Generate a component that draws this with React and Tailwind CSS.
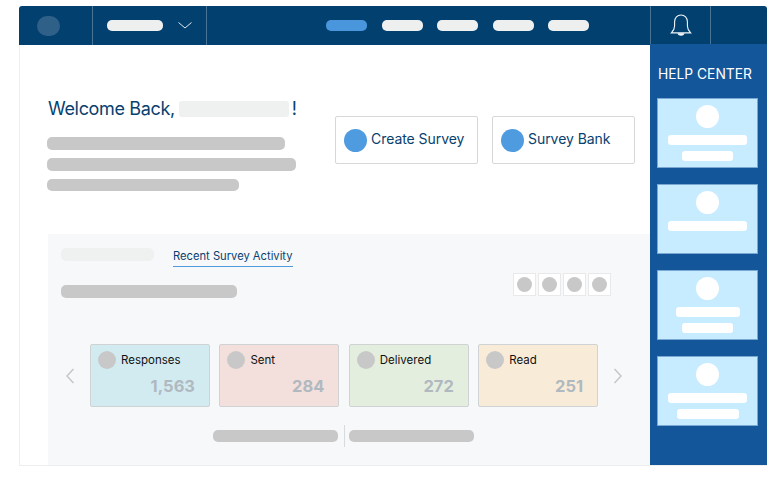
import React from 'react';

const bar = 'rounded-[5px] bg-[#c8c8c8]';

function Stat({ label, value, tint }) {
    return (
        <div className={`w-[120px] h-[63px] shrink-0 rounded-[2px] border border-[#cfd3d4] px-[7px] pt-[6px] ${tint}`}>
            <div className="flex items-center gap-[5px]">
                <div className="w-[18px] h-[18px] rounded-full bg-[#c8c8c8]" />
                <span className="text-[11.5px] leading-[18px] text-[#111]">{label}</span>
            </div>
            <div className="text-right pr-[7px] mt-[5px] text-[16.5px] leading-[24px] font-bold text-[#b0b9c0]">{value}</div>
        </div>
    );
}

function HelpCard({ first, second }) {
    return (
        <div className="w-[101px] h-[70px] flex flex-col items-center bg-[#c7ebff] border border-[#7aa8d0] pt-[6px]">
            <div className="w-[23px] h-[23px] rounded-full bg-white" />
            <div className="h-[10px] mt-[7px] rounded-[3px] bg-white" style={{ width: first }} />
            {second && <div className="h-[10px] mt-[6px] rounded-[3px] bg-white" style={{ width: second }} />}
        </div>
    );
}

function ActionButton({ label }) {
    return (
        <div className="w-[143px] h-[48px] flex items-center gap-[4px] pl-[8px] rounded-[2px] border border-[#d5d7d8] bg-white">
            <div className="w-[23px] h-[23px] rounded-full bg-[#4f9bdf]" />
            <span className="pb-[3px] text-[14px] tracking-[-0.05px] text-[#08416f]">{label}</span>
        </div>
    );
}

export default function App() {
    return (
        <div className="w-[776px] h-[480px] bg-white pt-[6px] pl-[19px] font-['Inter','Liberation_Sans',sans-serif]">
            <div className="w-[748px] h-[460px] flex flex-col rounded-t-[3px] overflow-hidden border-b border-[#eceeef]">
                {/* top nav */}
                <div className="h-[39px] shrink-0 flex items-stretch bg-[#02406f]">
                    <div className="w-[74px] flex items-center pl-[18px] border-r border-[#4a7496]">
                        <div className="w-[23px] h-[20px] rounded-full bg-[#2f6088]" />
                    </div>
                    <div className="w-[114px] flex items-center pl-[14px] border-r border-[#4a7496]">
                        <div className="w-[56px] h-[11px] rounded-[5px] bg-[#eef0f0]" />
                        <svg className="ml-[15px]" width="14" height="7" viewBox="0 0 14 7" fill="none" stroke="#dfe7ee" strokeWidth="1">
                            <path d="M0.5 0.5 7 6 13.5 0.5" />
                        </svg>
                    </div>
                    <div className="w-[443px] flex items-center gap-[14.5px] pl-[119px]">
                        <div className="w-[41px] h-[11px] rounded-[5px] bg-[#4a96dc]" />
                        <div className="w-[41px] h-[11px] rounded-[5px] bg-[#eef0f0]" />
                        <div className="w-[41px] h-[11px] rounded-[5px] bg-[#eef0f0]" />
                        <div className="w-[41px] h-[11px] rounded-[5px] bg-[#eef0f0]" />
                        <div className="w-[41px] h-[11px] rounded-[5px] bg-[#eef0f0]" />
                    </div>
                    <div className="w-[61px] flex items-center justify-center border-x border-[#4a7496]">
                        <svg width="22" height="23" viewBox="0 0 24 25" fill="none" stroke="#f2f6f9" strokeWidth="1.2">
                            <path d="M1.500 20.500c2.500-2.500 3.500-4 3.500-7.500V8.500C5 4 8 1 12 1s7 3 7 7.500V13c0 3.500 1 5 3.500 7.500z" />
                            <path d="M9 21.500c.5 2 5.500 2 6 0z" fill="#f2f6f9" />
                        </svg>
                    </div>
                    <div className="flex-1" />
                </div>

                <div className="flex-1 min-h-0 flex">
                    {/* main column */}
                    <div className="w-[631px] flex flex-col border-l border-[#eceeef]">
                        <div className="h-[189px] shrink-0 flex pl-[28px]">
                            <div className="w-[287px] pt-[51px]">
                                <div className="flex items-center h-[24px] text-[18px] tracking-[-0.35px] text-[#08416f]">
                                    <span>Welcome Back,</span>
                                    <div className="w-[110px] h-[16px] ml-[4px] mt-[2px] rounded-[3px] bg-[#eff1f1]" />
                                    <span className="ml-[3px]">!</span>
                                </div>
                                <div className="mt-[17px] -ml-[1px] flex flex-col gap-[8px]">
                                    <div className={`w-[238px] h-[13px] ${bar}`} />
                                    <div className={`w-[249px] h-[13px] ${bar}`} />
                                    <div className={`w-[192px] h-[12px] ${bar}`} />
                                </div>
                            </div>
                            <div className="flex gap-[14px] pt-[71px] items-start">
                                <ActionButton label="Create Survey" />
                                <ActionButton label="Survey Bank" />
                            </div>
                        </div>

                        {/* activity panel */}
                        <div className="flex-1 ml-[28px] bg-[#f7f8fa] pl-[13px] pt-[14px]">
                            <div className="flex items-start">
                                <div className="w-[93px] h-[13px] rounded-[5px] bg-[#eff1f1]" />
                                <div className="ml-[19px] h-[19px] border-b border-[#4f9bdf] text-[11.2px] leading-[16px] text-[#08416f]">
                                    Recent Survey Activity
                                </div>
                            </div>
                            <div className="flex items-start justify-between w-[550px] mt-[6px]">
                                <div className={`w-[176px] h-[13px] mt-[12px] ${bar}`} />
                                <div className="flex gap-[2px]">
                                    {[0, 1, 2, 3].map(i => (
                                        <div key={i} className="w-[23px] h-[23px] flex items-center justify-center bg-white border border-[#e8e9ea]">
                                            <div className="w-[15px] h-[15px] rounded-full bg-[#c8c8c8]" />
                                        </div>
                                    ))}
                                </div>
                            </div>
                            <div className="flex items-center mt-[46px] -ml-[1px]">
                                <svg className="w-[20px] shrink-0" width="9" height="16" viewBox="0 0 9 16" fill="none" stroke="#c4c8cb" strokeWidth="1.500">
                                    <path d="M8 1 1.500 8 8 15" />
                                </svg>
                                <div className="flex gap-[9.4px] ml-[10px]">
                                    <Stat label="Responses" value="1,563" tint="bg-[#d2ebf1]" />
                                    <Stat label="Sent" value="284" tint="bg-[#f3dfdc]" />
                                    <Stat label="Delivered" value="272" tint="bg-[#e4eedf]" />
                                    <Stat label="Read" value="251" tint="bg-[#f8ecd9]" />
                                </div>
                                <svg className="w-[20px] shrink-0 ml-[10px]" width="9" height="16" viewBox="0 0 9 16" fill="none" stroke="#c4c8cb" strokeWidth="1.500">
                                    <path d="M1 1 7.500 8 1 15" />
                                </svg>
                            </div>
                            <div className="flex items-center mt-[18px] pl-[152px]">
                                <div className={`w-[125px] h-[12px] ${bar}`} />
                                <div className="w-px h-[22px] ml-[6px] mr-[4px] bg-[#d8dadb]" />
                                <div className={`w-[125px] h-[12px] ${bar}`} />
                            </div>
                        </div>
                    </div>

                    {/* help center */}
                    <div className="w-[117px] -mt-[1px] flex flex-col pl-[7px] bg-[#14569a]">
                        <div className="pt-[22px] pl-[1px] h-[54px] text-[13.8px] leading-[17px] text-white">HELP CENTER</div>
                        <div className="flex flex-col gap-[16px]">
                            <HelpCard first={79} second={51} />
                            <HelpCard first={79} />
                            <HelpCard first={64} second={51} />
                            <HelpCard first={79} second={62} />
                        </div>
                    </div>
                </div>
            </div>
        </div>
    );
}
